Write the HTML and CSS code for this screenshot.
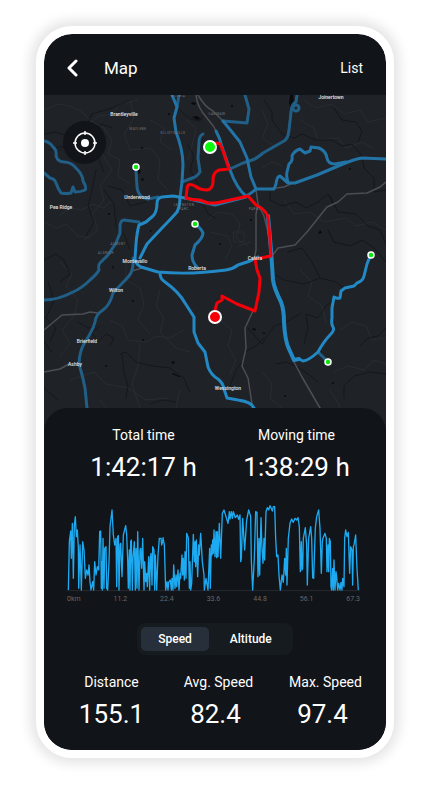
FILE: index.html
```html
<!DOCTYPE html>
<html lang="en">
  <head>
    <meta charset="UTF-8" />
    <meta name="viewport" content="width=device-width, initial-scale=1.0" />
    <title>Map</title>
    <link rel="stylesheet" href="styles.css">
  </head>
  <body>
    <main class="phone">
      <header class="topbar">
        <button class="back" type="button" aria-label="Back">
          <svg width="12" height="18" viewBox="0 0 12 18">
            <path d="M9 2 L2 9 L9 16" />
          </svg>
        </button>
        <h1>Map</h1>
        <a class="list-link" href="#list">List</a>
      </header>

      <section class="map">
        <svg class="map-canvas" viewBox="44 95 342 337" aria-label="Route map">
          <!-- contour lines -->
          <g class="minor">
            <path d="M44 110 L58 104 L70 106 L82 112 L92 122 L98 116 L112 114 L120 104 L138 100" />
            <path d="M92 122 L104 128 L112 140 L108 154 L120 160 L118 176 L130 184" />
            <path d="M100 150 L112 170 L100 186 L104 200 L92 214 L98 230 L84 240" />
            <path d="M130 100 L134 118 L124 134 L130 150 L150 148 L160 160 L158 180 L168 190" />
            <path d="M150 120 L164 128 L160 142 L172 150" />
            <path d="M186 120 L196 128 L192 146 L188 160" />
            <path d="M60 215 L70 208 L82 210 L92 204 L104 208 L112 200" />
            <path d="M44 222 L56 228 L66 224 L78 236 L90 238" />
            <path d="M60 262 L72 274 L66 286 L78 300 L74 316 L62 330 L70 344 L60 356" />
            <path d="M126 262 L126 280 L140 288 L144 304 L138 320 L150 334" />
            <path d="M110 320 L122 326 L128 340 L146 342 L156 336 L170 338 L184 330" />
            <path d="M140 345 L138 366 L132 384 L140 408" />
            <path d="M160 290 L156 306 L164 318 L160 332 L176 348 L190 352" />
            <path d="M70 380 L94 372 L106 384 L128 388 L146 400 L168 398" />
            <path d="M208 220 L218 212 L232 214 L240 224 L236 238 L248 246" />
            <path d="M210 232 L228 236 L232 246 L226 258" />
            <path d="M284 200 L294 214 L310 212 L324 222 L346 218 L356 226 L372 222 L386 230" />
            <path d="M300 120 L314 128 L318 140 L338 138 L346 148 L362 142 L372 148" />
            <path d="M304 100 L316 108 L332 104 L344 114 L360 110 L368 122 L386 118" />
            <path d="M262 110 L268 124 L262 138 L274 146" />
            <path d="M262 168 L272 162 L282 166" />
            <path d="M300 270 L312 282 L308 296 L322 306 L326 322" />
            <path d="M340 330 L352 322 L366 326 L372 340 L386 338" />
            <path d="M334 372 L348 366 L364 370 L374 360 L386 364" />
            <path d="M220 320 L232 330 L228 346 L236 360 L230 374" />
            <path d="M262 372 L272 384 L270 398 L282 408" />
            <path d="M100 400 L110 412 L104 424 M180 390 L176 406 L184 420 M330 390 L340 406 L332 424" />
            <path d="M234 232 L244 232 L244 242 L234 242 Z M238 246 L250 242" />
          </g>
          <!-- streams -->
          <g class="stream">
            <path d="M44 134 L56 132 L68 136 L80 128 L92 132 L102 124 L112 128" />
            <path d="M50 150 L62 146 L76 152 L88 150 L98 158 L104 172" />
            <path d="M60 150 L70 142 L74 128 L88 122 L92 114 L112 108 L130 100" />
            <path d="M96 170 L92 190 L88 206 L94 222 L86 236" />
            <path d="M104 190 L114 204 L116 226 L124 234 L130 250" />
            <path d="M108 186 L122 190 L130 206 L146 202" />
            <path d="M44 260 L56 254 L64 260 L70 274 L60 282" />
            <path d="M48 282 L54 300 L46 318 L56 328 L50 342" />
            <path d="M100 326 L92 332 L98 342 L106 334 L114 338 L110 346" />
            <path d="M78 322 L88 328 L96 326" />
            <path d="M120 354 L126 352 L136 362 L152 366 L170 368 L184 378 L190 392" />
            <path d="M122 354 L124 372 L128 386 L126 398" />
            <path d="M188 145 L194 156 L190 170 L198 184" />
            <path d="M178 108 L184 114 L190 119 L200 121 L203 116" />
            <path d="M198 202 L204 206 L208 214 L216 218" />
            <path d="M264 100 L272 112 L272 120 L282 134 L294 138 L302 134 L316 140 L332 140 L342 146 L352 144 L362 156 L364 168" />
            <path d="M292 95 L294 108 L288 120" />
            <path d="M334 108 L342 120 L356 122 L362 132 L358 142" />
            <path d="M270 192 L270 200 L282 206 L296 202 L306 208 L318 202 L328 194 L334 206" />
            <path d="M364 168 L374 178 L374 192 L386 190" />
            <path d="M330 196 L338 212 L356 214 L368 226 L380 230 L386 244" />
            <path d="M328 230 L334 242 L350 246 L362 240 L374 248 L386 262" />
            <path d="M288 252 L302 248 L312 262 L320 278 L336 282 L346 290" />
            <path d="M270 272 L284 280 L304 284 L320 278" />
            <path d="M335 298 L326 306 L318 318 L306 314 L308 328 L304 344" />
            <path d="M248 328 L262 344 L274 326 L286 322 L300 314" />
            <path d="M276 364 L286 362 L296 366 L308 374 L318 382" />
            <path d="M244 352 L256 346 L264 338" />
            <path d="M360 346 L368 338 L378 336 L386 328" />
            <path d="M344 398 L344 386 L354 376 L370 372 L386 374" />
            <path d="M230 386 L236 370 L242 362" />
            <path d="M44 342 L52 352 M44 388 L58 400 M150 404 L162 400 L176 402" />
          </g>
          <!-- ponds -->
          <g class="pond">
            <path d="M192 117 l5 -1 l4 3 l-4 1 z M192 102 l4 1 l-1 2 l-4 -1 z" />
            <path d="M290 95 h3 l1 8 l-3 5 l-2 -5 z" />
            <path d="M138 168 l3 3 l-2 3 l-3 -2 z M142 178 l2 1 l-1 2 l-2 -1 z" />
            <path d="M173 361 l2 1 l-1 2 l-3 -1 z M173 373 l8 4 l-2 0 l-7 -3 z" />
            <path d="M253 328 l3 1 l-1 2 l-3 -2 z M262 332 l4 1 l-2 1 z" />
            <path d="M320 230 l2 3 l-4 1 z M150 230 l2 1 l-2 1 z M112 266 l2 1 l-1 2 z" />
            <circle cx="109" cy="214" r="1" /><circle cx="251" cy="220" r="1" />
            <circle cx="133" cy="301" r="1" /><circle cx="143" cy="340" r="1" />
            <circle cx="285" cy="396" r="1" /><circle cx="333" cy="383" r="1" />
            <circle cx="350" cy="169" r="1" /><circle cx="220" cy="244" r="1" />
            <circle cx="106" cy="366" r="1" /><circle cx="232" cy="106" r="1" />
            <circle cx="169" cy="114" r="1" /><circle cx="142" cy="148" r="1" />
          </g>
          <!-- highways -->
          <g class="highway">
            <path d="M196 95 Q197 105 203 113 L214 127 L220 140" />
            <path d="M198 95 Q205 107 213 111 L223 121" />
            <path d="M256 190 L258 204 L264 216 L268 232 L271 256" />
            <path d="M258 204 L256 214 L256 250 L254 260" />
            <path d="M253 311 L245 328 L246 348 L242 366 L248 378 L252 404 L254 430" />
            <path d="M293 360 L302 377 L320 408 L334 432" />
            <path d="M272 256 L278 248 L295 245 L307 232 L327 207 L338 202 L347 194 L367 193 L380 187 L386 182" />
            <path d="M44 330 L62 315 L83 314 L90 312 L98 313" />
            <path d="M44 372 L60 369 L69 364" />
            <path d="M132 271 L142 268 M268 189 L284 187 L293 183" />
          </g>
          <!-- ridden tracks -->
          <g class="track faint">
            <path d="M44 141 Q50 142 53 147 Q57 150 56 156 Q58 162 64 162 Q71 162 76 168 Q83 175 83 181 Q87 188 85 190 Q81 192 75 192 L73 187 L71 193 Q66 194 61 193 Q58 189 56 183 Q55 179 50 178 L44 173" />
            <path d="M136 170 L137 187 Q138 194 142 197 L148 199 L158 197" />
            <path d="M203 134 Q199 136 199 142 L198 158 L200 172 Q198 175 195 177 L182 182" />
            <path d="M139 222 L124 220 Q121 220 120 225 L120 233 L116 243 L108 255 L100 263 Q98 265 99 270 Q97 274 90 280 Q82 288 73 292 Q58 300 44 300" />
            <path d="M133 258 Q134 270 129 276 L113 293 Q110 305 103 310 Q96 314 95 322 Q93 330 85 342 Q79 352 79 364 Q83 377 85 388 L87 408 L86 432" />
            <path d="M245 95 L249 109 L247 123 L223 121" />
            <path d="M297 95 L296 102 Q292 103 291 112 L289 130 Q288 139 284 141 L263 153 Q256 159 252 160 L243 163 L230 169" />
            <circle cx="296" cy="108" r="3" />
            <path d="M179 95 L177 107" />
            <path d="M318 352 L328 362" />
          </g>
          <g class="track medium">
            <path d="M172 95 L177 107 L174 118 L176 132 Q183 150 183 165 L182 182 L180 197" />
            <path d="M216 131 Q220 138 222 147 L230 170 Q237 189 246 196" />
            <path d="M223 121 L232 132 L240 142 L247 158 L251 177 L256 189" />
            <path d="M288 182 Q286 176 287 172 L289 164 Q293 161 292 156 Q294 151 300 149 L305 153 L310 151 L311 147 L319 148 Q326 151 327 158 Q328 164 335 164 L346 162" />
            <path d="M195 224 Q201 228 203 233 Q203 238 195 245 L192 255 Q192 262 197 267" />
            <path d="M185 198 L202 202 L215 205 L246 197" />
            <path d="M246 196 Q252 193 256 189 L274 189 L276 184 Q277 176 280 176 L288 183 L295 183 L317 175 L343 164 Q355 159 362 158 L386 159" />
          </g>
          <g class="track">
            <path d="M185 198 L173 196 L162 197 Q157 198 157 203 Q157 212 153 216 L146 222 L139 225 Q137 232 136 244 L135 258 Q135 264 141 267 L158 272 Q190 275 226 270 Q233 269 238 265 L250 261 L258 257" />
            <path d="M180 197 Q180 206 177 212 Q170 220 162 228 L147 244 L140 258" />
            <path d="M160 273 Q160 279 165 282 Q179 292 185 303 L194 317 L194 332 L198 343 L205 352 L208 367 Q211 375 218 379 Q223 383 224 389 L227 398 L238 400 Q252 402 254 408 L256 430" />
            <path class="wide" d="M268 216 L271 250 L273 280 Q274 288 281 302 Q284 310 284 322 Q285 341 289 349 L294 360 L299 359" />
            <path d="M299 359 L303 361 Q308 361 318 352 Q324 341 330 335 Q335 330 333 327 Q331 324 332 318 L332 308 L334 297 Q337 299 340 298 L341 291 L345 288 L354 286 L357 283 Q363 281 364 276 L367 264 L371 254" />
          </g>
          <!-- current route -->
          <path class="route" d="M210 147 L216 143 L220 144 L223 151 L229 169 L219 170 Q214 172 213 178 Q214 189 207 190 Q200 190 195 186 Q187 182 187 189 L186 198 Q192 200 200 200 L208 203 L216 203 L230 200 L248 196 L256 205 Q266 210 268 217 Q270 236 271 256 L255 259 L257 270 L260 278 L259 292 L255 311 L237 304 L222 296 L222 300 L217 303 L215 310 L215 317" />
          <g class="pin">
            <circle cx="136" cy="167" r="3" />
            <circle cx="195" cy="224" r="3" />
            <circle cx="371" cy="255" r="3" />
            <circle cx="328" cy="362" r="3" />
            <circle class="start" cx="210" cy="147" r="6" />
            <circle class="finish" cx="215" cy="317" r="6" />
          </g>
          <g class="district">
            <text x="178" y="97">SILURIA</text>
            <text x="138" y="130">MAYLENE</text>
            <text x="173" y="134">ELLIOTSVILLE</text>
            <text x="217" y="115">SAGINAW</text>
            <text x="184" y="206">LEXINGTON</text>
            <text x="184" y="210">PARC</text>
            <text x="255" y="210">PARGO</text>
            <text x="118" y="245">ALMONT</text>
            <text x="106" y="254">ALDRICH</text>
          </g>
          <g class="town">
            <text x="331" y="99">Joinertown</text>
            <text x="124" y="116">Brantleyville</text>
            <text x="137" y="199">Underwood</text>
            <text x="61" y="209">Pea Ridge</text>
            <text x="135" y="263">Montevallo</text>
            <text x="197" y="270">Roberta</text>
            <text x="255" y="260">Calera</text>
            <text x="116" y="292">Wilton</text>
            <text x="87" y="343">Brierfield</text>
            <text x="75" y="366">Ashby</text>
            <text x="228" y="390">Wessington</text>
          </g>
        </svg>
        <button class="locate" type="button" aria-label="My location">
          <svg width="24" height="24" viewBox="0 0 24 24">
            <circle class="ring" cx="12" cy="12" r="10" />
            <path d="M12 0 V4 M12 20 V24 M0 12 H4 M20 12 H24" />
            <circle class="dot" cx="12" cy="12" r="4" />
          </svg>
        </button>
      </section>

      <section class="sheet">
        <dl class="times">
          <div class="stat">
            <dt>Total time</dt>
            <dd>1:42:17 h</dd>
          </div>
          <div class="stat">
            <dt>Moving time</dt>
            <dd>1:38:29 h</dd>
          </div>
        </dl>

        <div class="chart">
          <svg viewBox="21 12 879 278" aria-label="Speed over distance">
            <path class="axis" d="M21 287 H900" />
            <polyline points="25,285 28,140 32,108 34,190 37,85 40,250 43,90 46,65 49,125 52,105 55,160 56,280 60,150 64,285 68,140 72,165 76,250 80,225 84,240 87,210 90,260 93,285 98,260 101,285 104,200 108,240 112,215 116,225 119,110 122,108 124,280 126,200 127,285 129,130 132,280 134,160 138,155 140,280 143,285 147,200 150,95 156,45 160,120 164,150 168,130 170,275 173,125 175,122 177,285 180,150 182,145 186,245 190,120 197,92 200,120 203,195 205,280 208,165 210,285 212,140 214,135 217,285 219,190 223,140 226,285 228,160 231,280 233,110 237,285 240,165 242,160 245,220 248,130 252,285 254,200 257,260 260,235 262,275 266,185 269,285 271,190 273,175 276,270 278,155 282,165 284,285 286,180 290,285 294,180 298,130 303,130 305,150 308,140 309,128 313,150 317,285 321,260 324,285 326,262 331,255 334,285 336,250 339,285 341,210 345,280 348,240 350,275 354,225 357,285 360,235 362,250 366,180 368,240 370,190 373,255 375,170 378,250 380,115 385,130 388,280 390,200 392,285 395,265 400,118 403,200 405,140 407,215 409,135 413,245 416,150 418,180 422,115 427,200 432,240 433,285 438,250 444,285 449,160 451,280 454,150 456,180 458,135 460,175 462,105 465,185 468,110 470,188 472,110 474,185 478,85 482,190 487,55 492,45 498,65 504,85 508,50 510,72 514,50 517,70 520,50 526,68 532,60 536,73 540,60 542,200 544,190 548,70 554,165 560,75 566,45 572,65 574,195 578,285 583,190 587,50 591,52 594,245 597,130 599,240 603,68 606,160 609,205 612,130 614,195 618,50 622,38 626,45 630,32 637,48 640,35 644,35 647,130 650,185 654,180 657,240 661,285 666,240 670,262 674,190 677,240 679,160 681,270 685,130 690,85 695,72 700,82 705,70 710,75 714,68 718,95 721,230 724,140 726,225 728,220 730,130 736,98 740,150 742,270 746,130 752,95 755,130 758,248 761,250 766,100 770,65 776,45 780,100 784,235 787,140 789,130 795,115 799,130 801,230 804,150 806,230 808,130 811,140 813,275 815,285 818,220 820,285 822,195 825,285 828,230 830,245 833,285 836,265 840,285 843,262 846,285 848,250 852,275 854,130 857,105 861,125 865,112 869,235 872,155 876,165 878,270 880,155 882,150 887,120 891,220 895,285" />
          </svg>
          <div class="scale">
            <span>0km</span>
            <span>11.2</span>
            <span>22.4</span>
            <span>33.6</span>
            <span>44.8</span>
            <span>56.1</span>
            <span>67.3</span>
          </div>
        </div>

        <div class="toggle">
          <button class="active" type="button" aria-pressed="true">Speed</button>
          <button type="button" aria-pressed="false">Altitude</button>
        </div>

        <dl class="totals">
          <div class="stat">
            <dt>Distance</dt>
            <dd>155.1</dd>
          </div>
          <div class="stat">
            <dt>Avg. Speed</dt>
            <dd>82.4</dd>
          </div>
          <div class="stat">
            <dt>Max. Speed</dt>
            <dd>97.4</dd>
          </div>
        </dl>
      </section>
    </main>
  </body>
</html>
```

FILE: styles.css
```css
* {
  box-sizing: border-box;
}
body {
  font-family: Roboto, "Liberation Sans", sans-serif;
  margin: 0;
  padding: 26px 30px 30px 36px;
  background-color: #fff;
  color: #fff;
}
button {
  font: inherit;
  color: inherit;
  border: none;
  padding: 0;
  background: none;
  cursor: pointer;
}
svg {
  display: block;
}
.phone {
  border: 8px solid #fff;
  border-radius: 36px;
  overflow: hidden;
  background-color: #111418;
  background-clip: padding-box;
  box-shadow: 0 0 12px 6px rgba(0, 0, 0, 0.1);
}

/* top bar */
.topbar {
  display: flex;
  align-items: center;
  height: 61px;
  padding: 6px 23px 0 23px;
}
.back path {
  fill: none;
  stroke: #fff;
  stroke-width: 3;
  stroke-linecap: round;
  stroke-linejoin: round;
}
.topbar h1 {
  margin: 0 auto 0 25px;
  font-size: 17px;
  font-weight: 400;
}
.list-link {
  color: #fff;
  font-size: 14px;
  text-decoration: none;
}

/* map */
.map {
  position: relative;
  background-color: #1f2227;
}
.map-canvas {
  width: 100%;
}
.map-canvas path {
  fill: none;
  stroke-linejoin: round;
  stroke-linecap: round;
}
.minor {
  stroke: #292d32;
}
.stream {
  stroke: #14171b;
}
.map-canvas .pond path,
.pond circle {
  fill: #090b0d;
}
.highway {
  stroke: #4b4e53;
  stroke-width: 1.5;
}
.track {
  fill: none;
  stroke: #2389c5;
  stroke-width: 3;
}
.track.faint {
  stroke: #215f87;
}
.track.medium {
  stroke: #2374a6;
}
.track .wide {
  stroke-width: 4;
}
.route {
  stroke: #f50008;
  stroke-width: 3;
}
.pin circle {
  fill: #0be60b;
  stroke: #fff;
  stroke-width: 1.5;
}
.pin .start {
  fill: #0bfa0b;
  stroke-width: 2;
}
.pin .finish {
  fill: #f50008;
  stroke-width: 2;
}
.map-canvas text {
  text-anchor: middle;
}
.district {
  fill: #7b7e83;
  font-size: 3px;
  letter-spacing: 0.5px;
}
.town {
  fill: #e4e6e9;
  font-size: 5px;
  font-weight: 500;
}
.locate {
  position: absolute;
  top: 26px;
  left: 19px;
  display: flex;
  align-items: center;
  justify-content: center;
  width: 43px;
  height: 43px;
  border-radius: 50%;
  background-color: #111418;
}
.locate path,
.locate .ring {
  fill: none;
  stroke: #fff;
  stroke-width: 1.5;
}
.locate .dot {
  fill: #fff;
}

/* bottom sheet */
.sheet {
  position: relative;
  margin-top: -24px;
  padding: 17px 0 20px;
  border-radius: 24px 24px 0 0;
  background-color: #111418;
}
dl,
dd {
  margin: 0;
}
.times,
.totals {
  display: flex;
}
.times {
  padding: 0 13px 0 23px;
}
.totals {
  padding: 0 7px 0 14px;
}
.stat {
  flex: 1;
  text-align: center;
}
.stat dt {
  font-size: 14px;
  line-height: 20px;
}
.stat dd {
  margin-top: 6px;
  font-size: 26px;
  line-height: 32px;
}
.totals .stat + .stat dd {
  padding-right: 6px;
}
.chart {
  margin: 16px 26px 0 23px;
}
.chart svg {
  width: 100%;
}
.chart polyline {
  fill: none;
  stroke: #1eaaf1;
  stroke-width: 4;
  stroke-linejoin: round;
}
.axis {
  stroke: #262b30;
  stroke-width: 3;
}
.scale {
  display: flex;
  justify-content: space-between;
  margin-top: 3px;
  color: #64686d;
  font-size: 7px;
  line-height: 8px;
}
.toggle {
  display: flex;
  gap: 4px;
  width: fit-content;
  margin: 20px auto 17px;
  padding: 4px;
  border-radius: 8px;
  background-color: #161b20;
  font-size: 12px;
  font-weight: 500;
}
.toggle button {
  height: 24px;
  padding: 0 17px;
  border-radius: 5px;
}
.toggle .active {
  background-color: #27303a;
}
```
